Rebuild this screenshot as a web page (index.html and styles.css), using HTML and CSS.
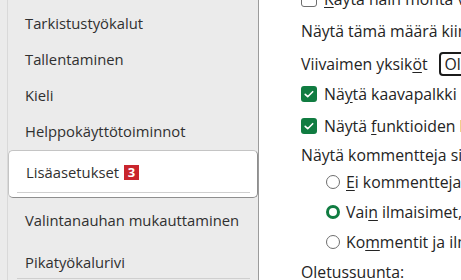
FILE: index.html
```html
<!DOCTYPE html>
<html>
<head>
<meta http-equiv="Content-Type" content="text/html; charset=utf-8"/>
<title>Asetukset</title>
<link rel="stylesheet" href="styles.css">
</head>
<body>
<div class="window">
  <div class="side">
    <ul class="nav">
      <li class="item">Tarkistustyökalut</li>
      <li class="item">Tallentaminen</li>
      <li class="item">Kieli</li>
      <li class="item">Helppokäyttötoiminnot</li>
      <li class="item selected"><span>Lisäasetukset</span><span class="badge">3</span></li>
      <li class="item tall">Valintanauhan mukauttaminen</li>
      <li class="item tall group-end">Pikatyökalurivi</li>
    </ul>
  </div>

  <div class="main">
    <div class="row r0"><span class="check"></span><span><u>K</u>äytä näin monta viimeksi käytettyä kansiota</span></div>
    <div class="row r1">Näytä tämä määrä kiinnitettyjä tiedostoja</div>
    <div class="row r2">
      <span>Viivaimen yksik<u>ö</u>t</span>
      <span class="select">Oletusyksiköt</span>
    </div>
    <div class="row r3"><span class="check on"><svg viewBox="0 0 16 16" width="16" height="16"><path d="M4.2 8.3l2.5 2.4 5-5" fill="none" stroke="#fff" stroke-width="1.6" stroke-linecap="round" stroke-linejoin="round"/></svg></span><span>Nä<u>y</u>tä kaavapalkki</span></div>
    <div class="row r4"><span class="check on"><svg viewBox="0 0 16 16" width="16" height="16"><path d="M4.2 8.3l2.5 2.4 5-5" fill="none" stroke="#fff" stroke-width="1.6" stroke-linecap="round" stroke-linejoin="round"/></svg></span><span>Näytä <u>f</u>unktioiden kohdeohjeet</span></div>
    <div class="row r5">Näytä kommentteja sisältävissä soluissa:</div>
    <div class="row radio-row"><span class="radio"></span><span><u>E</u>i kommentteja tai ilmaisimia</span></div>
    <div class="row radio-row"><span class="radio on"></span><span>Vai<u>n</u> ilmaisimet, kommentit vain osoitettaessa</span></div>
    <div class="row radio-row"><span class="radio"></span><span>Ko<u>m</u>mentit ja ilmaisimet</span></div>
    <div class="row r9">Oletussuunta:</div>
  </div>
</div>
</body>
</html>
```

FILE: styles.css
```css
html, body {
  margin: 0;
  padding: 0;
  background: #fff;
}

body {
  font-family: "Open Sans", "Noto Sans", sans-serif;
  font-size: 14.8px;
  color: #242424;
  overflow: hidden;
}

.window {
  display: flex;
  height: 280px;
  overflow: hidden;
}

/* left navigation */
.side {
  width: 252px;
  padding-left: 7px;
  background: #ebebeb;
  flex: none;
}

.nav {
  list-style: none;
  margin: 0;
  padding: 5px 0 0 0;
  height: 275px;
  border-left: 1px solid #d9d9d9;
  border-right: 1px solid #9b9b9b;
  background: #ebebeb;
}

.item {
  height: 36px;
  display: flex;
  align-items: center;
  padding-left: 17px;
  color: #303030;
}

.item.tall {
  height: 42px;
}

.item.tall.group-end {
  height: 41px;
}

.item.selected {
  margin-top: 1px;
  margin-bottom: 1px;
  background: #fff;
  border: 1px solid #c4c4c4;
  border-right-color: #8e8e8e;
  border-bottom-color: #8e8e8e;
  border-radius: 5px;
  position: relative;
  gap: 5px;
  padding-bottom: 4px;
  box-sizing: border-box;
  height: 48px;
}

.item.selected::after {
  content: "";
  position: absolute;
  left: 8px;
  right: 7px;
  bottom: 4px;
  border-top: 1px solid #cfcfcf;
}

.badge {
  display: inline-block;
  background: #c9252d;
  color: #fff;
  font-weight: bold;
  font-size: 13px;
  line-height: 15px;
  width: 15px;
  text-align: center;
}

.item.group-end {
  position: relative;
}

.item.group-end::after {
  content: "";
  position: absolute;
  left: 9px;
  right: 8px;
  top: 37px;
  border-top: 1px solid #cfcfcf;
}

/* right settings column */
.main {
  flex: 1;
  padding-left: 42px;
  margin-top: -16px;
  font-size: 15.8px;
  white-space: nowrap;
  overflow: hidden;
}

.row {
  display: flex;
  align-items: center;
  gap: 7px;
}

.r0 { height: 30px; }
.r1 { height: 34px; }
.r2 { height: 31px; gap: 11px; }
.r3 { height: 30px; }
.r4 { height: 33px; }
.r5 { height: 25px; }
.radio-row { height: 30px; padding-left: 25px; gap: 6px; }
.r9 { height: 30px; }

u {
  text-underline-offset: 2px;
}

.check {
  width: 14px;
  height: 14px;
  border: 1px solid #6e6e6e;
  border-radius: 3px;
  flex: none;
  display: inline-flex;
  align-items: center;
  justify-content: center;
}

.check.on {
  width: 16px;
  height: 16px;
  border: none;
  background: #107c41;
}

.select {
  display: inline-block;
  height: 20px;
  line-height: 20px;
  border: 2px solid #1b1b1b;
  border-radius: 4px;
  padding: 0 8px 0 4px;
}

.radio {
  width: 12px;
  height: 12px;
  border: 1px solid #6e6e6e;
  border-radius: 50%;
  flex: none;
}

.radio.on {
  width: 8px;
  height: 8px;
  border: 3px solid #107c41;
}
```
